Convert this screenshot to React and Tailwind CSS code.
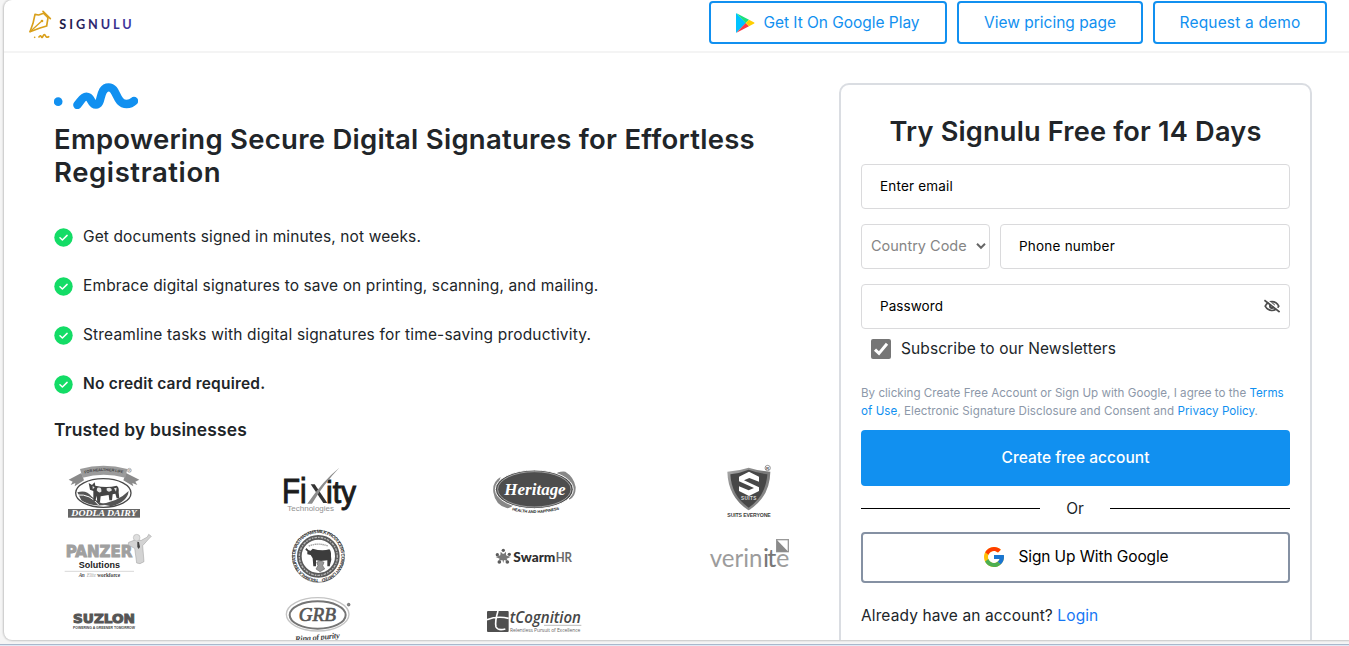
import React, { useState } from "react";
import { FcGoogle } from "react-icons/fc";

const features = [
  { text: "Get documents signed in minutes, not weeks.", className: "tracking-[0.117px]" },
  { text: "Embrace digital signatures to save on printing, scanning, and mailing.", className: "tracking-[0.122px]" },
  { text: "Streamline tasks with digital signatures for time-saving productivity.", className: "tracking-[0.173px]" },
  { text: "No credit card required.", className: "font-semibold tracking-[0.2px]" },
];

function SignuluLogo() {
  return (
    <svg className="w-[130px] h-[50px]" viewBox="0 0 390 150" aria-label="Signulu">
      <defs>
        <linearGradient id="wordmark" x1="0" x2="1">
          <stop offset="0" stopColor="#1b1840" />
          <stop offset="1" stopColor="#4037a5" />
        </linearGradient>
      </defs>
      <g fill="none" stroke="#d9a01c" strokeWidth="5" strokeLinecap="round" strokeLinejoin="round">
        <path d="M69 34 L91 56" />
        <path d="M45 43 L56 45 L71 40 L84 53 L80 78 L60 84 L30 95 L39 70 Z" />
        <path d="M30 95 L62 66" strokeWidth="4" />
        <path d="M57 111 C61 104 63 108 65 112 C69 115 69 102 74 104 C77 106 77 115 86 110" />
      </g>
      <circle cx="66" cy="63" r="4" fill="#d9a01c" />
      <circle cx="44" cy="112" r="2.5" fill="#d9a01c" />
      <text x="118" y="86" textLength="217" fontFamily="Lato" fontSize="38" fontWeight="700" fill="url(#wordmark)">
        SIGNULU
      </text>
    </svg>
  );
}

function PlayIcon() {
  return (
    <svg className="w-[19px] h-[20px]" viewBox="0 0 19 20">
      <path d="M0.5 0.2 L10 10 L0.5 19.8 Q0 19.5 0 19 V1 Q0 0.5 0.5 0.2Z" fill="#00c3ff" />
      <path d="M0.5 0.2 L13 6.8 L9.6 10Z" fill="#1be07c" />
      <path d="M0.5 19.8 L13 13.2 L9.6 10Z" fill="#ff3a44" />
      <path d="M13 6.8 L18.2 9.5 Q18.8 10 18.2 10.5 L13 13.2 L9.6 10Z" fill="#ffce00" />
    </svg>
  );
}

function Squiggle() {
  return (
    <svg className="w-[84px] h-[26px]" viewBox="162 249 252 78">
      <circle cx="174.500" cy="305" r="13" fill="#1190f0" />
      <path
        d="M232 315 C243 302 248 290 259 290 C276 290 271 314 288 314 C308 314 296 262 326 262 C353 262 346 312 380 312 C391 312 397 308 402 303"
        fill="none"
        stroke="#1190f0"
        strokeWidth="25"
        strokeLinecap="round"
      />
    </svg>
  );
}

function CheckIcon() {
  return (
    <svg className="w-[19px] h-[19px]" viewBox="0 0 19 19">
      <circle cx="9.500" cy="9.500" r="9.200" fill="#13dc66" />
      <path d="M6 9.800 L8.400 12 L13.100 7.400" fill="none" stroke="#fff" strokeWidth="1.500" strokeLinecap="round" strokeLinejoin="round" />
    </svg>
  );
}

/* ---------- Customer logos ---------- */

function DodlaDairy() {
  return (
    <svg className="w-[100px] h-[65px]" viewBox="42 12 300 195">
      <path id="dodla-arc" d="M132 56 Q190 40 252 56" fill="none" />
      <path d="M86 74 L124 54 L132 76 L104 94 L106 84 L92 90 L98 80Z M298 74 L258 54 L250 76 L280 94 L277 84 L292 90 L286 80Z" fill="#8a8a8a" />
      <path d="M120 42 Q190 22 262 42 L256 68 Q190 50 128 68Z" fill="#9b9b9b" />
      <text fontFamily="Liberation Sans" fontSize="11.500" fontWeight="700" fill="#3f3f3f">
        <textPath href="#dodla-arc" startOffset="2" textLength="116">FOR HEALTHIER LIFE</textPath>
      </text>
      <circle cx="268" cy="46" r="6" fill="none" stroke="#777" strokeWidth="1.500" />
      <text x="264.500" y="50" fontFamily="Liberation Sans" fontSize="10" fill="#666">R</text>
      <ellipse cx="190" cy="114" rx="83" ry="43" fill="#fff" stroke="#4a4a4a" strokeWidth="4" />
      <path d="M112 112 Q140 104 154 124 Q170 140 196 150 Q150 156 124 136Z" fill="#555" />
      <path d="M112 120 Q150 116 176 150" fill="none" stroke="#fff" strokeWidth="3" />
      <path d="M176 146 Q230 144 266 108 Q262 142 214 154Z" fill="#555" />
      <path d="M146 84 L156 90 L164 82 L166 92 Q200 100 230 92 Q238 96 236 112 L238 130 L230 130 L226 116 L218 118 L216 136 L208 136 L206 120 L182 124 L180 142 L172 142 L170 122 L166 138 L160 138 L160 108 L150 104Z" fill="#444" />
      <path d="M172 98 Q186 94 184 110 Q176 116 170 106Z M200 100 Q214 94 216 106 Q206 114 200 106Z M158 92 L164 98 L158 102Z M222 100 L230 98 L228 110Z" fill="#e6e6e6" />
      <rect x="84" y="162" width="216" height="26" fill="#666" />
      <text x="94" y="184" textLength="196" lengthAdjust="spacingAndGlyphs" fontFamily="Liberation Serif" fontSize="25" fontStyle="italic" fontWeight="700" fill="#fff">
        DODLA DAIRY
      </text>
    </svg>
  );
}

function Fixity() {
  return (
    <svg className="w-[100px] h-[65px]" viewBox="687 12 300 195">
      <g fontFamily="Liberation Sans" fill="#1c1c1c" stroke="#1c1c1c" strokeWidth="3">
        <text x="726" y="143" textLength="74" lengthAdjust="spacingAndGlyphs" fontSize="104">Fi</text>
        <text x="858" y="143" textLength="90" lengthAdjust="spacingAndGlyphs" fontSize="92">ity</text>
      </g>
      <path d="M812 88 L824 88 L862 144 L850 144Z" fill="#333" />
      <path d="M802 146 L816 146 Q850 88 898 38 Q848 78 802 146Z" fill="#8c8c8c" />
      <text x="742" y="167" textLength="140" fontFamily="Liberation Sans" fontSize="24" fill="#929292">Technologies</text>
    </svg>
  );
}

function Heritage() {
  return (
    <svg className="w-[100px] h-[65px]" viewBox="42 12 300 195">
      <path id="heritage-arc" d="M126 166 Q196 184 270 163" fill="none" />
      <path d="M92 66 Q66 80 70 112 Q76 152 112 160 Q124 158 130 150 L82 96Z M254 60 Q264 48 286 50 Q312 66 317 96 Q318 124 298 134 L280 76Z" fill="#888" />
      <ellipse cx="193" cy="103" rx="117" ry="58" fill="#4d4d4d" stroke="#fff" strokeWidth="3" />
      <ellipse cx="193" cy="103" rx="110" ry="53" fill="none" stroke="#c9c9c9" strokeWidth="2" />
      <text x="103" y="120" textLength="184" fontFamily="Liberation Serif" fontSize="51" fontStyle="italic" fontWeight="700" fill="#fff">
        Heritage
      </text>
      <text fontFamily="Liberation Sans" fontSize="12" fontWeight="700" fill="#222">
        <textPath href="#heritage-arc" textLength="144">HEALTH AND HAPPINESS</textPath>
      </text>
    </svg>
  );
}

function SuitsEveryone() {
  return (
    <svg className="w-[100px] h-[65px]" viewBox="687 12 300 195">
      <defs>
        <linearGradient id="shield" x1="0" x2="1" y1="0" y2="1">
          <stop offset="0" stopColor="#aaa" />
          <stop offset="0.500" stopColor="#777" />
          <stop offset="1" stopColor="#999" />
        </linearGradient>
      </defs>
      <path d="M772 50 Q806 48 836 38 Q868 48 901 50 Q900 126 836 166 Q774 126 772 50Z" fill="url(#shield)" />
      <path d="M781 58 Q812 54 836 44 Q862 54 892 58 Q888 122 836 158 Q784 122 781 58Z" fill="#474747" />
      <path d="M837 50 L867 65 V80 L838 69 L822 76 L867 97 V108 L837 123 L807 108 V94 L836 106 L852 99 L807 79 V65Z" fill="#fff" />
      <text x="813" y="135" textLength="46" fontFamily="Liberation Sans" fontSize="14" fontWeight="700" fill="#ddd">SUITS</text>
      <circle cx="893" cy="39" r="8" fill="none" stroke="#666" strokeWidth="2" />
      <text x="888" y="44" fontFamily="Liberation Sans" fontSize="13" fontWeight="700" fill="#555">R</text>
      <text x="772" y="186" textLength="130" fontFamily="Liberation Sans" fontSize="15.500" fontWeight="700" fill="#3d3d3d">
        SUITS EVERYONE
      </text>
    </svg>
  );
}

function Panzer() {
  return (
    <svg className="w-[100px] h-[65px]" viewBox="42 207 300 195">
      <text x="77" y="306" textLength="200" lengthAdjust="spacingAndGlyphs" fontFamily="DejaVu Sans" fontSize="46" fontWeight="700" fill="#a0a0a0" stroke="#a0a0a0" strokeWidth="3">
        PANZER
      </text>
      <path d="M266 262 L282 256 L304 256 L322 246 L326 238 L334 244 L326 252 L308 272 L312 320 L300 326 L290 324 L284 280 L264 270Z" fill="#d3d3d3" stroke="#999" strokeWidth="1.500" />
      <circle cx="290" cy="248" r="10" fill="#dedede" stroke="#aaa" strokeWidth="1.500" />
      <path d="M292 260 L297 261 L300 276 L296 282 L292 276Z" fill="#444" />
      <text x="116" y="340" textLength="124" fontFamily="Liberation Sans" fontSize="27" fontWeight="700" fill="#222">Solutions</text>
      <path d="M74 349 H282" stroke="#c4c4c4" strokeWidth="2" />
      <g fontFamily="Liberation Serif" fontSize="16" fontWeight="700">
        <text x="116" y="366" textLength="18" fontStyle="italic" fill="#555">An</text>
        <text x="140" y="366" textLength="28" fontStyle="italic" fontWeight="400" fill="#aaa">Elite</text>
        <text x="172" y="366" textLength="68" fill="#444">workforce</text>
      </g>
    </svg>
  );
}

function CattleSeal() {
  return (
    <svg className="w-[100px] h-[65px]" viewBox="687 207 300 195">
      <path id="seal-outer" d="M835 372 A69 69 0 1 1 835.100 372" fill="none" />
      <circle cx="835" cy="304" r="78" fill="#fff" stroke="#666" strokeWidth="2" />
      <text fontFamily="Liberation Sans" fontSize="14" fontWeight="700" fill="#333">
        <textPath href="#seal-outer" textLength="424">TIRUMALA TIRUPATI DEVASTHANAMS MILK PRODUCERS COMPANY LIMITED</textPath>
      </text>
      <circle cx="835" cy="304" r="57" fill="#fff" stroke="#5a5a5a" strokeWidth="14" />
      <circle cx="835" cy="304" r="57" fill="none" stroke="#b5b5b5" strokeWidth="4" strokeDasharray="5 3 8 3" />
      <path d="M799 279 L806 286 L812 287 L818 281 Q846 290 868 283 Q874 288 873 304 L874 314 L869 334 L862 334 L862 316 L842 318 L828 316 L828 334 L820 334 L818 310 L812 300 L802 298 L802 289 L796 284Z" fill="#3c3c3c" />
      <path d="M830 322 L840 317 L852 322 L848 332 L854 342 L840 350 L828 342 L834 332Z" fill="#999" stroke="#666" strokeWidth="2" />
      <path d="M806 273 Q835 262 864 273" fill="none" stroke="#999" strokeWidth="4" strokeDasharray="4 2" />
    </svg>
  );
}

function SwarmHR() {
  return (
    <svg className="w-[100px] h-[65px]" viewBox="42 207 300 195">
      <g fill="#5c5c5c">
        <circle cx="100" cy="286" r="5" />
        <circle cx="82" cy="299" r="5" />
        <circle cx="118" cy="298" r="5" />
        <circle cx="88" cy="321" r="5.500" />
        <circle cx="112" cy="321" r="5.500" />
        <path d="M92 290 L98 296 L102 296 L108 290 L108 301 L122 306 L110 311 L114 319 L102 315 L100 324 L97 315 L85 319 L89 311 L77 306 L91 301Z" fill="#777" />
      </g>
      <text x="130" y="320" textLength="126" lengthAdjust="spacingAndGlyphs" fontFamily="Lato" fontSize="38" fontWeight="900" fill="#2e2e2e">Swarm</text>
      <text x="257" y="320" textLength="49" lengthAdjust="spacingAndGlyphs" fontFamily="Lato" fontSize="38" fontWeight="700" fill="#696969">HR</text>
    </svg>
  );
}

function Verinite() {
  return (
    <svg className="w-[100px] h-[65px]" viewBox="687 207 300 195">
      <g fontFamily="Lato" fontSize="76" fill="#9c9c9c">
        <text x="719" y="336" textLength="158" lengthAdjust="spacingAndGlyphs">verin</text>
        <text x="879" y="336" textLength="40" fill="#777">it</text>
        <text x="918" y="336" textLength="40">e</text>
      </g>
      <rect x="920" y="254" width="35" height="36" fill="#fff" stroke="#999" strokeWidth="4" />
      <path d="M920 254 L955 290 H920Z" fill="#8a8a8a" />
    </svg>
  );
}

function Suzlon() {
  return (
    <svg className="w-[100px] h-[65px]" viewBox="42 402 300 195">
      <text x="99" y="505" textLength="186" lengthAdjust="spacingAndGlyphs" fontFamily="DejaVu Sans" fontSize="38" fontWeight="700" fill="#555" stroke="#555" strokeWidth="3">
        SUZLON
      </text>
      <text x="99" y="521" textLength="186" lengthAdjust="spacingAndGlyphs" fontFamily="Liberation Sans" fontSize="10" fontWeight="700" fill="#444">
        POWERING A GREENER TOMORROW
      </text>
    </svg>
  );
}

function Grb() {
  return (
    <svg className="w-[100px] h-[65px]" viewBox="687 402 300 195">
      <ellipse cx="833" cy="478" rx="94" ry="50" fill="#fff" stroke="#c4c4c4" strokeWidth="4" />
      <ellipse cx="833" cy="480" rx="84" ry="41" fill="#fff" stroke="#757575" strokeWidth="6" />
      <text x="776" y="498" textLength="112" lengthAdjust="spacingAndGlyphs" fontFamily="Liberation Serif" fontSize="58" fontStyle="italic" fill="#555" stroke="#555" strokeWidth="2">
        GRB
      </text>
      <circle cx="926" cy="449" r="4" fill="#888" stroke="#555" strokeWidth="2" />
      <text x="766" y="561" textLength="134" transform="rotate(-5 766 561)" fontFamily="Liberation Serif" fontSize="25" fontStyle="italic" fontWeight="700" fill="#444">
        Ring of purity
      </text>
    </svg>
  );
}

function TCognition() {
  return (
    <svg className="w-[100px] h-[65px]" viewBox="42 402 300 195">
      <rect x="51" y="468" width="65" height="63" rx="3" fill="#4f4f4f" />
      <path d="M84 468 Q74 500 78 516 Q84 528 106 522 M51 494 Q82 482 116 490" fill="none" stroke="#fff" strokeWidth="5" />
      <text x="119" y="504" textLength="214" lengthAdjust="spacingAndGlyphs" fontFamily="Open Sans" fontSize="46" fontStyle="italic" fontWeight="600" fill="#474747">
        tCognition
      </text>
      <path d="M222 511 H334" stroke="#999" strokeWidth="2" />
      <text x="120" y="530" textLength="211" fontFamily="Open Sans" fontSize="15" fill="#666">
        Relentless Pursuit of Excellence
      </text>
    </svg>
  );
}

export default function App() {
  const [subscribed, setSubscribed] = useState(true);

  return (
    <div className="h-[646px] w-full overflow-hidden bg-[#f5f5f5] font-['Inter',sans-serif] text-[15.5px] leading-6 text-[#212529] flex flex-col">
      <div className="ml-1 h-[640px] shrink-0 overflow-hidden rounded-l-lg bg-white shadow-[0_0_2px_1px_rgba(0,0,0,0.2)]">
        {/* Header */}
        <header className="h-[53px] border-b-2 border-[#f4f4f4] pl-4 pr-[22px] flex items-start justify-between">
          <SignuluLogo />
          <div className="flex gap-2.5 pt-px text-[#1190f0]">
            <button className="h-[43px] w-[238px] rounded border-2 border-[#1190f0] flex items-center justify-center gap-2 tracking-[-0.04px]">
              <PlayIcon />
              Get It On Google Play
            </button>
            <button className="h-[43px] w-[186px] rounded border-2 border-[#1190f0]">View pricing page</button>
            <button className="h-[43px] w-[174px] rounded border-2 border-[#1190f0] tracking-[0.17px]">Request a demo</button>
          </div>
        </header>

        <main className="flex items-start justify-between pl-[50px] pr-[37px] pt-[30px]">
          {/* Pitch */}
          <section className="w-[745px]">
            <Squiggle />
            <h1 className="mt-[14px] whitespace-nowrap text-[27.5px] leading-[33px] font-semibold tracking-[0.265px]">
              Empowering Secure Digital Signatures for Effortless
              <br />
              <span className="tracking-[0.6px]">Registration</span>
            </h1>
            <ul className="mt-[36px] flex flex-col gap-[25px]">
              {features.map((f) => (
                <li key={f.text} className="flex items-center gap-2.5 h-6">
                  <CheckIcon />
                  <span className={f.className}>{f.text}</span>
                </li>
              ))}
            </ul>
            <h2 className="mt-[20px] text-[17.4px] leading-[27px] font-semibold tracking-[0.15px]">Trusted by businesses</h2>
            <div className="mt-[16px] grid grid-cols-[repeat(4,100px)] gap-x-[115px]">
              <DodlaDairy />
              <Fixity />
              <Heritage />
              <SuitsEveryone />
              <Panzer />
              <CattleSeal />
              <SwarmHR />
              <Verinite />
              <Suzlon />
              <Grb />
              <TCognition />
            </div>
          </section>

          {/* Signup form */}
          <section className="h-[600px] w-[473px] rounded-[10px] border-2 border-[#dadde2] px-5 pt-[30px]">
            <h2 className="text-center text-[27.2px] leading-[33.600px] font-semibold tracking-[0.18px]">Try Signulu Free for 14 Days</h2>
            <div className="mt-[15px] flex flex-col gap-[15px]">
              <input
                placeholder="Enter email"
                className="h-[45px] w-full rounded border border-[#dadadc] px-[18px] text-[13.5px] tracking-[0.18px] placeholder:text-black"
              />
              <div className="flex gap-2.5">
                <div className="h-[45px] w-[129px] rounded border border-[#dadadc] pl-[9px] pr-[3px] flex items-center justify-between text-[#858585]">
                  <span className="text-[14.5px]">Country Code</span>
                  <svg className="w-[10px] h-[10px]" viewBox="0 0 10 10">
                    <path d="M1 2.800 L5 6.800 L9 2.800" fill="none" stroke="#666" strokeWidth="2" />
                  </svg>
                </div>
                <input
                  placeholder="Phone number"
                  className="h-[45px] min-w-0 flex-1 rounded border border-[#dadadc] px-[18px] text-[13.5px] tracking-[0.22px] placeholder:text-black"
                />
              </div>
              <div className="h-[45px] rounded border border-[#dadadc] pl-[18px] pr-[9px] flex items-center">
                <input placeholder="Password" className="min-w-0 flex-1 text-[13.5px] tracking-[0.06px] placeholder:text-black" />
                <svg className="w-4 h-[14px]" viewBox="0 0 16 14" fill="none" stroke="#4d4d4d">
                  <path d="M1.200 7.200 Q3.600 2.800 8 2.700 Q12.400 2.800 14.800 7.200 Q12.400 11.400 8 11.500 Q3.600 11.400 1.200 7.200Z" strokeWidth="1.700" />
                  <circle cx="8" cy="7" r="2" strokeWidth="2" />
                  <path d="M1.600 0.300 L16.400 11.800" stroke="#fff" strokeWidth="1.500" />
                  <path d="M0.400 1.200 L15.600 13" strokeWidth="1.700" />
                </svg>
              </div>
            </div>

            <label className="mt-2 ml-2.5 flex items-center gap-2.5">
              <input type="checkbox" className="sr-only" checked={subscribed} onChange={() => setSubscribed(!subscribed)} />
              <span className="size-5 rounded-[2px] bg-[#767676] flex items-center justify-center">
                {subscribed && (
                  <svg className="size-4" viewBox="0 0 16 16">
                    <path d="M2 8.600 L6 12.400 L14 2.800" fill="none" stroke="#fff" strokeWidth="3" />
                  </svg>
                )}
              </span>
              <span className="tracking-[0.095px]">Subscribe to our Newsletters</span>
            </label>

            <p className="mt-[23px] text-[11.6px] leading-[18px] whitespace-nowrap text-[#8d98a9] tracking-[0.016px]">
              By clicking Create Free Account or Sign Up with Google, I agree to the <a className="text-[#1190f0]">Terms</a>
              <br />
              <span className="tracking-[0.06px]">
                <a className="text-[#1190f0]">of Use</a>, Electronic Signature Disclosure and Consent and <a className="text-[#1190f0]">Privacy Policy</a>.
              </span>
            </p>

            <button className="mt-2.5 h-14 w-full rounded bg-[#1190f0] font-medium text-white tracking-[0.03px]">Create free account</button>

            <div className="mt-[11px] flex h-6 items-center justify-between">
              <div className="h-px w-[179px] bg-black" />
              <span>Or</span>
              <div className="h-px w-[180px] bg-black" />
            </div>

            <button className="mt-[11px] h-[51px] w-full rounded border-2 border-[#8591a3] flex items-center justify-center gap-3 text-black tracking-[-0.11px]">
              <FcGoogle className="size-6" />
              Sign Up With Google
            </button>

            <p className="mt-[21px] tracking-[0.11px]">
              Already have an account? <a className="text-[#1677f5]">Login</a>
            </p>
          </section>
        </main>
      </div>
      <div className="mt-[4px] h-0.5 shrink-0 border-t border-[#a9b8cc] bg-[#dfeaf5]" />
    </div>
  );
}
